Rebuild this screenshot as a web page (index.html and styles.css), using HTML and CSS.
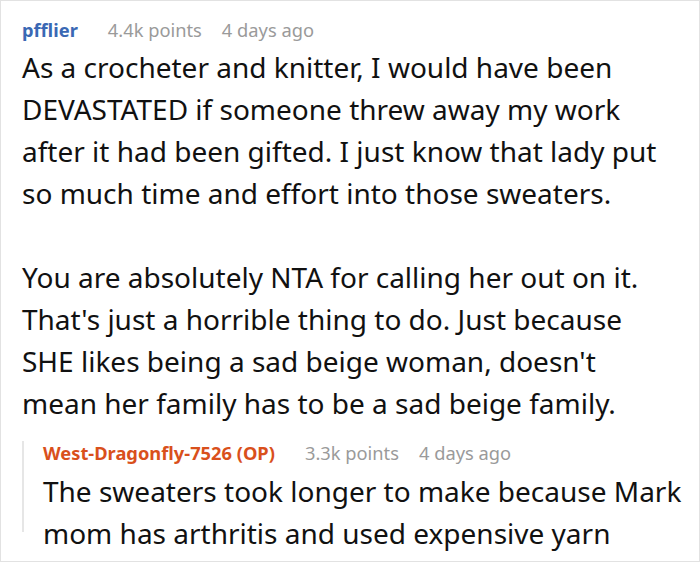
FILE: index.html
```html
<!DOCTYPE html>
<html>
<head>
<meta charset="utf-8">
<link rel="stylesheet" href="styles.css">
</head>
<body>
<div class="frame">
  <div class="comment">
    <div class="meta">
      <span class="user">pfflier</span>
      <span class="info">4.4k points</span>
      <span class="info">4 days ago</span>
    </div>
    <div class="body main-body">
      <p>As a crocheter and knitter, I would have been DEVASTATED if someone threw away my work after it had been gifted. I just know that lady put so much time and effort into those sweaters.</p>
      <p>You are absolutely NTA for calling her out on it. That's just a horrible thing to do. Just because SHE likes being a sad beige woman, doesn't mean her family has to be a sad beige family.</p>
    </div>
    <div class="reply">
      <div class="meta">
        <span class="user op">West-Dragonfly-7526 (OP)</span>
        <span class="info">3.3k points</span>
        <span class="info">4 days ago</span>
      </div>
      <div class="body">
        <p>The sweaters took longer to make because Mark mom has arthritis and used expensive yarn</p>
      </div>
    </div>
  </div>
</div>
</body>
</html>
```

FILE: styles.css
```css
html, body {
  margin: 0;
  padding: 0;
  background: #fff;
}
.frame {
  width: 700px;
  height: 562px;
  box-sizing: border-box;
  border: 1px solid #e2e2e2;
  overflow: hidden;
  font-family: "Noto Sans", "Open Sans", sans-serif;
}
.comment {
  padding: 17px 8px 0 21px;
}
.meta {
  display: flex;
  gap: 20px;
  align-items: baseline;
  font-size: 18.3px;
  line-height: 24px;
}
.user {
  font-weight: 700;
  color: #3a68b4;
  margin-right: 10px;
}
.user.op {
  color: #d9501c;
}
.info {
  color: #9a9a9a;
}
.body {
  font-size: 28px;
  line-height: 42px;
  color: #111;
  margin-top: 4px;
}
.main-body {
  padding-right: 20px;
}
.body p {
  margin: 0 0 42px 0;
}
.body p:last-child {
  margin-bottom: 0;
}
.reply {
  margin-top: 28px;
  height: 91px;
  border-left: 2px solid #e6e6e6;
  padding-left: 19px;
}
.reply .meta {
  margin-top: -11px;
}
.reply .body {
  margin-top: 5px;
}
```
